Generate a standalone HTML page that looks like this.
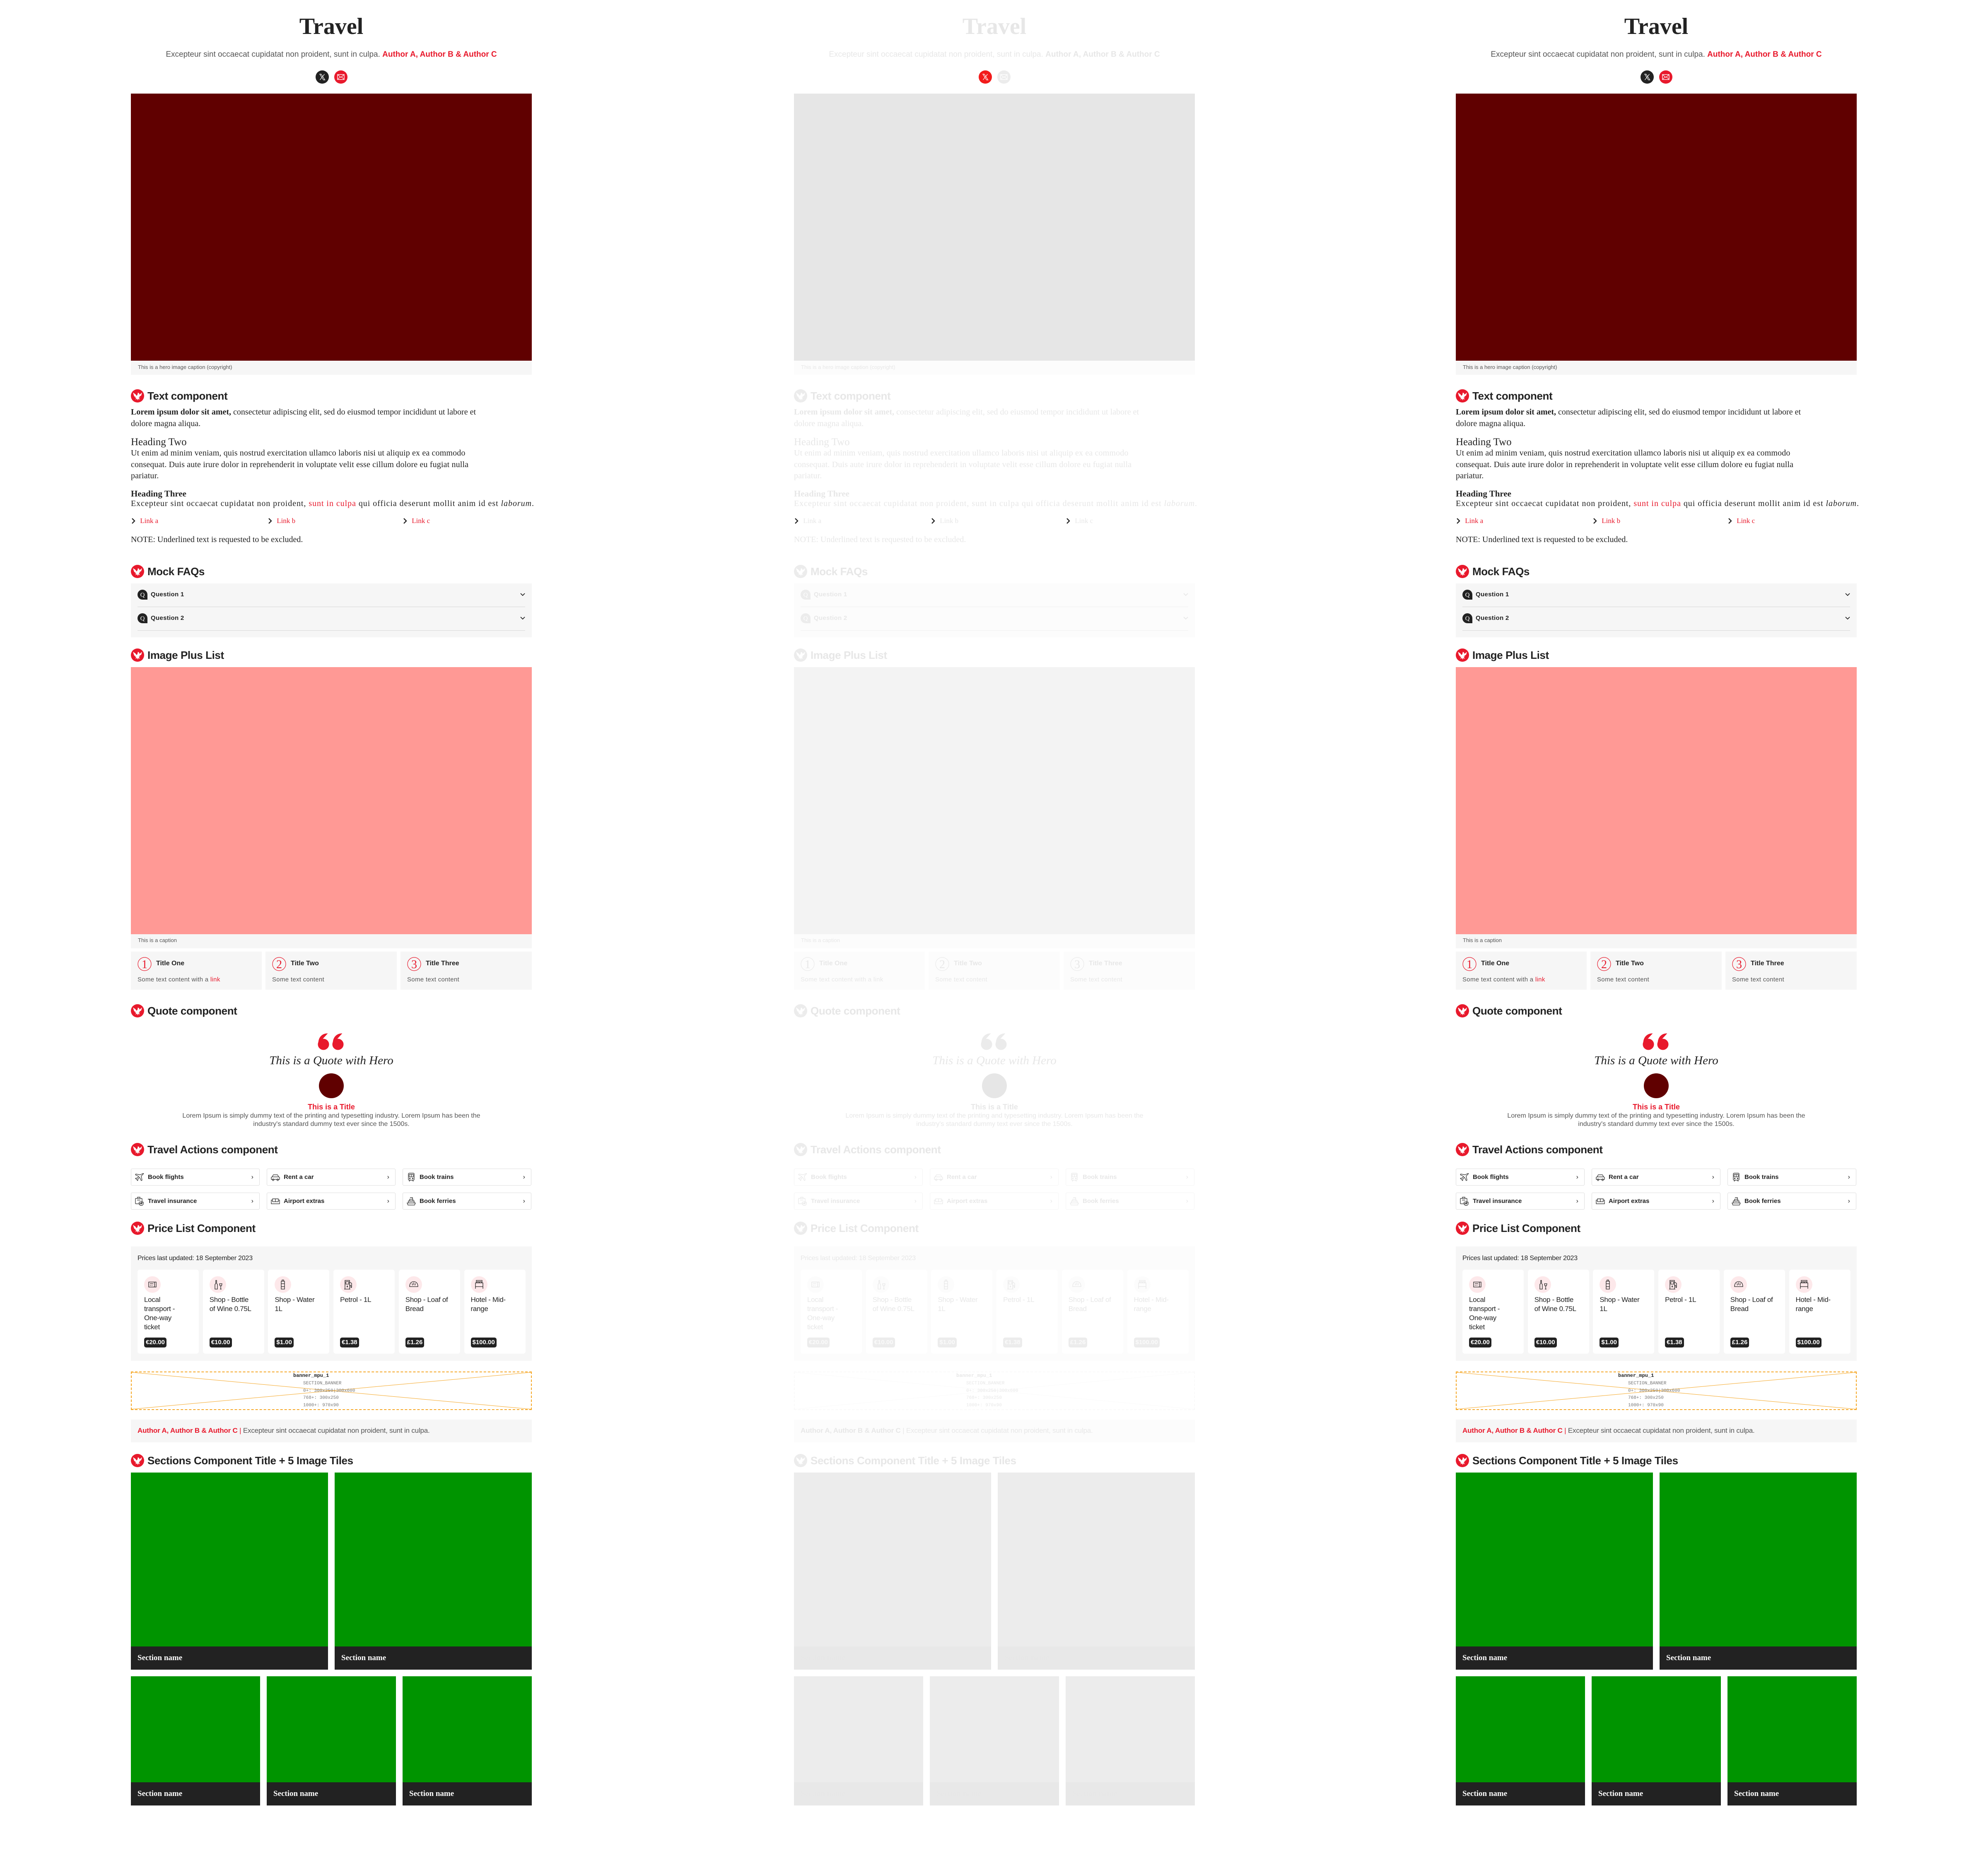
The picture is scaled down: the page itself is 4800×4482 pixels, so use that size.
<!DOCTYPE html>
<html><head><meta charset="utf-8">
<style>
*{margin:0;padding:0;box-sizing:border-box}
html,body{width:4800px;height:4482px;background:#fff;overflow:hidden}
body{position:relative;font-family:"Liberation Sans",sans-serif;color:#222}
.col{position:absolute;top:0;width:968px;height:4482px}
.a{position:absolute}
.serif{font-family:"Liberation Serif",serif}
.nw{white-space:nowrap}
.red{color:#e8192c}
.h{left:0;height:36px;display:flex;align-items:center;width:968px}
.h span{margin-left:8px;font-size:26px;font-weight:bold;letter-spacing:-0.4px;white-space:nowrap}
.logo{width:32px;height:32px;flex:none}
.logo .c{fill:#e8192c}.logo .w{fill:#fff}
.body{font-family:"Liberation Serif",serif;font-size:20px;line-height:27.5px;white-space:nowrap;left:0}
.lbox{background:#f6f6f6}
.hero{background:#600000}
.pink{background:#ff9995}
.green{background:#009400}
.band{background:#222;color:#fff}
.card{background:#fff;border-radius:6px}
.badge{background:#222;color:#fff;border-radius:5px;font-weight:bold;font-size:15px;height:24px;line-height:24px;padding:0 4px;display:inline-block}
.btn{border:1.5px solid #ddd;border-radius:3px;height:41px;width:311px;display:flex;align-items:center;background:#fff}
.btn svg{margin-left:8px;flex:none}
.btn span{margin-left:8px;font-size:15px;font-weight:bold;flex:1;white-space:nowrap}
.btn i{font-style:normal;margin-right:14px;font-size:16px;color:#222}
.ic{color:#222}
.qi{fill:#222}
.avatar{background:#600000;border-radius:50%}
.qm{fill:#e8192c;stroke:#e8192c}
.xi{fill:#222}.mi{fill:#e8192c}
.pico{fill:#fde8ea}
.banner{border:2px dashed #f5a623}
.bn line{stroke:#f5a623}
.mono{font-family:"Liberation Mono",monospace}
.nt{fill:#e8192c}
.numc{stroke:#e8192c}
/* ghost */
.g,.g *{color:#e7e7e7 !important}
.g .logo .c{fill:#ececec}
.g .hero{background:#e6e6e6}
.g .pink{background:#f3f3f3}
.g .green{background:#ececec}
.g .band{background:#e8e8e8}
.g .lbox{background:#fcfcfc}
.g .badge{background:#ececec;color:#fafafa !important}
.g .btn{border-color:#f4f4f4}
.g .qi{fill:#ececec}
.g .avatar{background:#e6e6e6}
.g .qm{fill:#ebebeb;stroke:#ebebeb}
.g .xi{fill:#f21b1b}.g .mi{fill:#ececec}
.g .pico{fill:#fcfcfc}
.g .banner{border-color:#f9f9f9}
.g .bn line{stroke:#fafafa}
.g .numc{stroke:#eaeaea}
.g .nt{fill:#e8e8e8}
.g .divl{background:#f0f0f0 !important}
</style></head><body>

<template id="tpl">
<div class="a serif" style="left:0;top:30px;width:968px;text-align:center;font-size:56px;font-weight:bold;line-height:68px">Travel</div>
<div class="a nw" style="left:0;top:120px;width:968px;text-align:center;font-size:19px;line-height:24px;color:#555">Excepteur sint occaecat cupidatat non proident, sunt in culpa. <b class="red">Author A, Author B &amp; Author C</b></div>
<svg class="a" style="left:446px;top:170px" width="32" height="32" viewBox="0 0 32 32"><circle class="xi" cx="16" cy="16" r="16"/><path d="M10 9h3.5l9 14H19zM21.5 9l-11 14" stroke="#fff" stroke-width="1.2" fill="none"/></svg>
<svg class="a" style="left:491px;top:170px" width="32" height="32" viewBox="0 0 32 32"><circle class="mi" cx="16" cy="16" r="16"/><rect x="8" y="10" width="16" height="12" fill="none" stroke="#fff" stroke-width="1.4"/><path d="M8 10l8 7 8-7M8 22l6-6M24 22l-6-6" stroke="#fff" stroke-width="1.2" fill="none"/></svg>
<div class="a hero" style="left:0;top:226px;width:968px;height:645px"></div>
<div class="a lbox" style="left:0;top:871px;width:968px;height:34px"></div>
<div class="a nw" style="left:17px;top:879px;font-size:13px;color:#555">This is a hero image caption (copyright)</div>

<div class="a h" style="top:938px"><svg class="logo" viewBox="0 0 32 32"><circle class="c" cx="16" cy="16" r="16"/><path class="w" d="M5 8l6 4 3 4 2-3 1-5 3 2 1 3 6-5-2 7-5 3 3 1-4 1 3 5-4-2-1 4-2-4-4 2 2-4-4-1 3-1-4-2z"/></svg><span>Text component</span></div>
<div class="a body" style="top:982px"><b>Lorem ipsum dolor sit amet,</b> consectetur adipiscing elit, sed do eiusmod tempor incididunt ut labore et<br>dolore magna aliqua.</div>
<div class="a serif nw" style="left:0;top:1052px;font-size:25px;line-height:32px">Heading Two</div>
<div class="a body" style="top:1081px;letter-spacing:0.15px">Ut enim ad minim veniam, quis nostrud exercitation ullamco laboris nisi ut aliquip ex ea commodo<br>consequat. Duis aute irure dolor in reprehenderit in voluptate velit esse cillum dolore eu fugiat nulla<br>pariatur.</div>
<div class="a serif nw" style="left:0;top:1179px;font-size:21px;font-weight:bold;line-height:26px">Heading Three</div>
<div class="a body" style="top:1203px;letter-spacing:0.95px">Excepteur sint occaecat cupidatat non proident, <span class="red">sunt in culpa</span> qui officia deserunt mollit anim id est <i>laborum</i>.</div>
<div class="a serif nw" style="left:0;top:1247px;font-size:17px;line-height:22px"><svg width="14" height="16" viewBox="0 0 14 16" style="vertical-align:-3px"><path d="M3 2l6 6-6 6" stroke="#222" stroke-width="2.4" fill="none"/></svg> <span class="red" style="margin-left:4px">Link a</span></div>
<div class="a serif nw" style="left:330px;top:1247px;font-size:17px;line-height:22px"><svg width="14" height="16" viewBox="0 0 14 16" style="vertical-align:-3px"><path d="M3 2l6 6-6 6" stroke="#222" stroke-width="2.4" fill="none"/></svg> <span class="red" style="margin-left:4px">Link b</span></div>
<div class="a serif nw" style="left:656px;top:1247px;font-size:17px;line-height:22px"><svg width="14" height="16" viewBox="0 0 14 16" style="vertical-align:-3px"><path d="M3 2l6 6-6 6" stroke="#222" stroke-width="2.4" fill="none"/></svg> <span class="red" style="margin-left:4px">Link c</span></div>
<div class="a body" style="top:1290px">NOTE: Underlined text is requested to be excluded.</div>

<div class="a h" style="top:1362px"><svg class="logo" viewBox="0 0 32 32"><circle class="c" cx="16" cy="16" r="16"/><path class="w" d="M5 8l6 4 3 4 2-3 1-5 3 2 1 3 6-5-2 7-5 3 3 1-4 1 3 5-4-2-1 4-2-4-4 2 2-4-4-1 3-1-4-2z"/></svg><span>Mock FAQs</span></div>
<div class="a lbox" style="left:0;top:1409px;width:968px;height:130px"></div>
<svg class="a" style="left:16px;top:1424px" width="24" height="24" viewBox="0 0 24 24"><path class="qi" d="M12 0a12 12 0 1 0 0 24h12V12A12 12 0 0 0 12 0z"/><text x="12" y="17" text-anchor="middle" font-family="Liberation Serif" font-size="15" fill="#fff">Q</text></svg>
<div class="a nw" style="left:48px;top:1426px;font-size:15px;font-weight:bold;line-height:20px;letter-spacing:0.3px">Question 1</div>
<svg class="a ic" style="left:940px;top:1430px" width="12" height="12" viewBox="0 0 12 12"><path d="M1 3l5 5 5-5" stroke="currentColor" stroke-width="1.8" fill="none"/></svg>
<div class="a divl" style="left:16px;top:1465px;width:936px;height:1px;background:#d6d6d6"></div>
<svg class="a" style="left:16px;top:1481px" width="24" height="24" viewBox="0 0 24 24"><path class="qi" d="M12 0a12 12 0 1 0 0 24h12V12A12 12 0 0 0 12 0z"/><text x="12" y="17" text-anchor="middle" font-family="Liberation Serif" font-size="15" fill="#fff">Q</text></svg>
<div class="a nw" style="left:48px;top:1483px;font-size:15px;font-weight:bold;line-height:20px;letter-spacing:0.3px">Question 2</div>
<svg class="a ic" style="left:940px;top:1487px" width="12" height="12" viewBox="0 0 12 12"><path d="M1 3l5 5 5-5" stroke="currentColor" stroke-width="1.8" fill="none"/></svg>
<div class="a divl" style="left:16px;top:1522px;width:936px;height:1px;background:#d6d6d6"></div>

<div class="a h" style="top:1564px"><svg class="logo" viewBox="0 0 32 32"><circle class="c" cx="16" cy="16" r="16"/><path class="w" d="M5 8l6 4 3 4 2-3 1-5 3 2 1 3 6-5-2 7-5 3 3 1-4 1 3 5-4-2-1 4-2-4-4 2 2-4-4-1 3-1-4-2z"/></svg><span>Image Plus List</span></div>
<div class="a pink" style="left:0;top:1611px;width:968px;height:645px"></div>
<div class="a lbox" style="left:0;top:2256px;width:968px;height:34px"></div>
<div class="a nw" style="left:17px;top:2263px;font-size:13px;color:#555">This is a caption</div>
<div class="a lbox" style="left:0;top:2298px;width:316px;height:92px"></div>
<div class="a lbox" style="left:325px;top:2298px;width:317px;height:92px"></div>
<div class="a lbox" style="left:651px;top:2298px;width:317px;height:92px"></div>
<svg class="a" style="left:16px;top:2311px" width="34" height="34"><circle class="numc" cx="17" cy="17" r="16" fill="none" stroke-width="1.2"/><text class="nt" x="17" y="27" text-anchor="middle" font-family="Liberation Serif" font-size="28">1</text></svg>
<div class="a nw" style="left:61px;top:2318px;font-size:16px;font-weight:bold">Title One</div>
<div class="a nw" style="left:16px;top:2357px;font-size:15px;color:#555;letter-spacing:0.3px">Some text content with a <span class="red">link</span></div>
<svg class="a" style="left:341px;top:2311px" width="34" height="34"><circle class="numc" cx="17" cy="17" r="16" fill="none" stroke-width="1.2"/><text class="nt" x="17" y="27" text-anchor="middle" font-family="Liberation Serif" font-size="28">2</text></svg>
<div class="a nw" style="left:386px;top:2318px;font-size:16px;font-weight:bold">Title Two</div>
<div class="a nw" style="left:341px;top:2357px;font-size:15px;color:#555;letter-spacing:0.3px">Some text content</div>
<svg class="a" style="left:667px;top:2311px" width="34" height="34"><circle class="numc" cx="17" cy="17" r="16" fill="none" stroke-width="1.2"/><text class="nt" x="17" y="27" text-anchor="middle" font-family="Liberation Serif" font-size="28">3</text></svg>
<div class="a nw" style="left:712px;top:2318px;font-size:16px;font-weight:bold">Title Three</div>
<div class="a nw" style="left:667px;top:2357px;font-size:15px;color:#555;letter-spacing:0.3px">Some text content</div>

<div class="a h" style="top:2423px"><svg class="logo" viewBox="0 0 32 32"><circle class="c" cx="16" cy="16" r="16"/><path class="w" d="M5 8l6 4 3 4 2-3 1-5 3 2 1 3 6-5-2 7-5 3 3 1-4 1 3 5-4-2-1 4-2-4-4 2 2-4-4-1 3-1-4-2z"/></svg><span>Quote component</span></div>
<svg class="a" style="left:449px;top:2494px" width="70" height="42" viewBox="0 0 70 42"><circle class="qm" cx="16" cy="28" r="13"/><circle class="qm" cx="51" cy="28" r="13"/><path class="qm" d="M4 26C4 10 14 2 26 2M39 26C39 10 49 2 61 2" fill="none" stroke-width="1"/></svg>
<div class="a serif nw" style="left:0;top:2542px;width:968px;text-align:center;font-size:29px;font-style:italic;line-height:38px">This is a Quote with Hero</div>
<div class="a avatar" style="left:454px;top:2592px;width:60px;height:60px"></div>
<div class="a nw red" style="left:0;top:2661px;width:968px;text-align:center;font-size:18px;font-weight:bold;line-height:24px">This is a Title</div>
<div class="a" style="left:60px;top:2685px;width:848px;text-align:center;font-size:16px;line-height:20px;color:#555">Lorem Ipsum is simply dummy text of the printing and typesetting industry. Lorem Ipsum has been the<br>industry's standard dummy text ever since the 1500s.</div>

<div class="a h" style="top:2758px"><svg class="logo" viewBox="0 0 32 32"><circle class="c" cx="16" cy="16" r="16"/><path class="w" d="M5 8l6 4 3 4 2-3 1-5 3 2 1 3 6-5-2 7-5 3 3 1-4 1 3 5-4-2-1 4-2-4-4 2 2-4-4-1 3-1-4-2z"/></svg><span>Travel Actions component</span></div>
<div class="a btn" style="left:0;top:2822px"><svg class="ic" width="24" height="24" viewBox="0 0 24 24" fill="none" stroke="currentColor" stroke-width="1.2"><path d="M20 3c1-1 2 0 1 1l-5 5 2 10-2 1-4-8-4 4v3l-1 1-2-3-3-2 1-1h3l4-4-8-4 1-2 10 2z"/></svg><span>Book flights</span><i>›</i></div>
<div class="a btn" style="left:328px;top:2822px"><svg class="ic" width="24" height="24" viewBox="0 0 24 24" fill="none" stroke="currentColor" stroke-width="1.2"><path d="M2 17v-5l2-1 3-5h10l3 5 2 1v5zM4 11h16"/><circle cx="6.5" cy="18" r="2"/><circle cx="17.5" cy="18" r="2"/></svg><span>Rent a car</span><i>›</i></div>
<div class="a btn" style="left:656px;top:2822px"><svg class="ic" width="24" height="24" viewBox="0 0 24 24" fill="none" stroke="currentColor" stroke-width="1.2"><rect x="5" y="2" width="14" height="17" rx="2"/><rect x="7" y="5" width="10" height="6"/><path d="M12 5v6M7 22l2-3M17 22l-2-3"/><circle cx="8.5" cy="15" r="1"/><circle cx="15.5" cy="15" r="1"/></svg><span>Book trains</span><i>›</i></div>
<div class="a btn" style="left:0;top:2880px"><svg class="ic" width="24" height="24" viewBox="0 0 24 24" fill="none" stroke="currentColor" stroke-width="1.2"><rect x="2" y="5" width="16" height="13" rx="1"/><path d="M7 5V2h6v3M6 9h8"/><path d="M16 13l5 1v4c0 2-2 4-5 4-3 0-5-2-5-4v-4z"/><circle cx="16" cy="17" r="1.5"/></svg><span>Travel insurance</span><i>›</i></div>
<div class="a btn" style="left:328px;top:2880px"><svg class="ic" width="24" height="24" viewBox="0 0 24 24" fill="none" stroke="currentColor" stroke-width="1.2"><path d="M2 18V9h3v4h14V9h3v9zM5 13V6h14v7M12 6v7"/></svg><span>Airport extras</span><i>›</i></div>
<div class="a btn" style="left:656px;top:2880px"><svg class="ic" width="24" height="24" viewBox="0 0 24 24" fill="none" stroke="currentColor" stroke-width="1.2"><path d="M2 16h20l-2 5H4zM5 16v-5h14v5M8 11V7h8v4M9 3h6v4"/><path d="M7 13h1M10 13h1M13 13h1M16 13h1"/></svg><span>Book ferries</span><i>›</i></div>

<div class="a h" style="top:2948px"><svg class="logo" viewBox="0 0 32 32"><circle class="c" cx="16" cy="16" r="16"/><path class="w" d="M5 8l6 4 3 4 2-3 1-5 3 2 1 3 6-5-2 7-5 3 3 1-4 1 3 5-4-2-1 4-2-4-4 2 2-4-4-1 3-1-4-2z"/></svg><span>Price List Component</span></div>
<div class="a lbox" style="left:0;top:3010px;width:968px;height:276px"></div>
<div class="a nw" style="left:16px;top:3029px;font-size:16px;line-height:20px;letter-spacing:-0.2px">Prices last updated: 18 September 2023</div>
<div id="cards"></div>

<div class="a banner" style="left:0;top:3312px;width:968px;height:93px"></div>
<svg class="a bn" style="left:0;top:3312px" width="968" height="93"><line x1="2" y1="2" x2="966" y2="91" stroke-width="1"/><line x1="966" y1="2" x2="2" y2="91" stroke-width="1"/></svg>
<div class="a mono nw" style="left:392px;top:3315px;font-size:12px;font-weight:bold;line-height:14px">banner_mpu_1</div>
<div class="a mono nw" style="left:416px;top:3333px;font-size:11px;line-height:17.5px;color:#777">SECTION_BANNER<br>0+: 300x250|300x600<br>768+: 300x250<br>1000+: 970x90</div>

<div class="a lbox" style="left:0;top:3428px;width:968px;height:55px"></div>
<div class="a nw" style="left:16px;top:3444px;font-size:17px;line-height:22px;color:#555;letter-spacing:-0.2px"><b class="red">Author A, Author B &amp; Author C</b> <span class="red">|</span> Excepteur sint occaecat cupidatat non proident, sunt in culpa.</div>

<div class="a h" style="top:3509px"><svg class="logo" viewBox="0 0 32 32"><circle class="c" cx="16" cy="16" r="16"/><path class="w" d="M5 8l6 4 3 4 2-3 1-5 3 2 1 3 6-5-2 7-5 3 3 1-4 1 3 5-4-2-1 4-2-4-4 2 2-4-4-1 3-1-4-2z"/></svg><span>Sections Component Title + 5 Image Tiles</span></div>
<div class="a green" style="left:0;top:3556px;width:476px;height:420px"></div>
<div class="a band serif" style="left:0;top:3976px;width:476px;height:56px;font-size:19px;font-weight:bold;line-height:56px;padding-left:16px">Section name</div>
<div class="a green" style="left:492px;top:3556px;width:476px;height:420px"></div>
<div class="a band serif" style="left:492px;top:3976px;width:476px;height:56px;font-size:19px;font-weight:bold;line-height:56px;padding-left:16px">Section name</div>
<div class="a green" style="left:0;top:4048px;width:312px;height:256px"></div>
<div class="a band serif" style="left:0;top:4304px;width:312px;height:56px;font-size:19px;font-weight:bold;line-height:56px;padding-left:16px">Section name</div>
<div class="a green" style="left:328px;top:4048px;width:312px;height:256px"></div>
<div class="a band serif" style="left:328px;top:4304px;width:312px;height:56px;font-size:19px;font-weight:bold;line-height:56px;padding-left:16px">Section name</div>
<div class="a green" style="left:656px;top:4048px;width:312px;height:256px"></div>
<div class="a band serif" style="left:656px;top:4304px;width:312px;height:56px;font-size:19px;font-weight:bold;line-height:56px;padding-left:16px">Section name</div>
</template>

<script>
var items=[
 ["Local<br>transport -<br>One-way<br>ticket","€20.00",'<rect x="-9" y="-6" width="18" height="12"/><path d="M5 -6v12M-6 -2h8M-6 2h2M-2 2h2"/>'],
 ["Shop - Bottle<br>of Wine 0.75L","€10.00",'<path d="M-7 11v-11l2-3v-7h2v7l2 3v11zM4 -2h6l-1 5h-4zM7 3v8M5 11h4"/>'],
 ["Shop - Water<br>1L","$1.00",'<path d="M-2 -11h4v3h-4zM-4 -8h8v19h-8zM-4 -2h8M-4 5h8"/>'],
 ["Petrol - 1L","€1.38",'<path d="M-8 11v-21h11v21zM-10 11h15M-6 -7h7v6h-7zM3 -6l5 3v9c0 2-2 2-2 0v-4h-3M-2.5 3c-1 1.5-1 3 0 3s1-1.5 0-3z"/>'],
 ["Shop - Loaf of<br>Bread","£1.26",'<path d="M-10 5c0-9 5-12 10-12s10 3 10 12zM-4 -3l1 5M0 -5v6M4 -3l-1 5"/>'],
 ["Hotel - Mid-<br>range","$100.00",'<path d="M-9 10v-14h18v14M-9 5h18M-7 -4v-6h14v6M-5 -4v-3h4v3M1 -4v-3h4v3"/>']
];
var h='';
for(var i=0;i<6;i++){
 var x=16+i*157.7;
 h+='<div class="a card" style="left:'+x+'px;top:3066px;width:148px;height:203px"></div>';
 h+='<svg class="a ic" style="left:'+(x+16)+'px;top:3082px" width="40" height="40" viewBox="-20 -20 40 40"><ellipse class="pico" cx="0" cy="0" rx="20" ry="20"/><g fill="none" stroke="currentColor" stroke-width="1.3">'+items[i][2]+'</g></svg>';
 h+='<div class="a nw" style="left:'+(x+16)+'px;top:3128px;font-size:17px;line-height:22px;letter-spacing:-0.3px">'+items[i][0]+'</div>';
 h+='<div class="a" style="left:'+(x+16)+'px;top:3230px"><span class="badge">'+items[i][1]+'</span></div>';
}
var t=document.getElementById('tpl').innerHTML.replace('<div id="cards"></div>',h);
var L=[316,1917,3515];
for(var k=0;k<3;k++){
 var d=document.createElement('div');
 d.className='col'+(k==1?' g':'');
 d.style.left=L[k]+'px';
 d.innerHTML=t;
 document.body.appendChild(d);
}
</script>
</body></html>
